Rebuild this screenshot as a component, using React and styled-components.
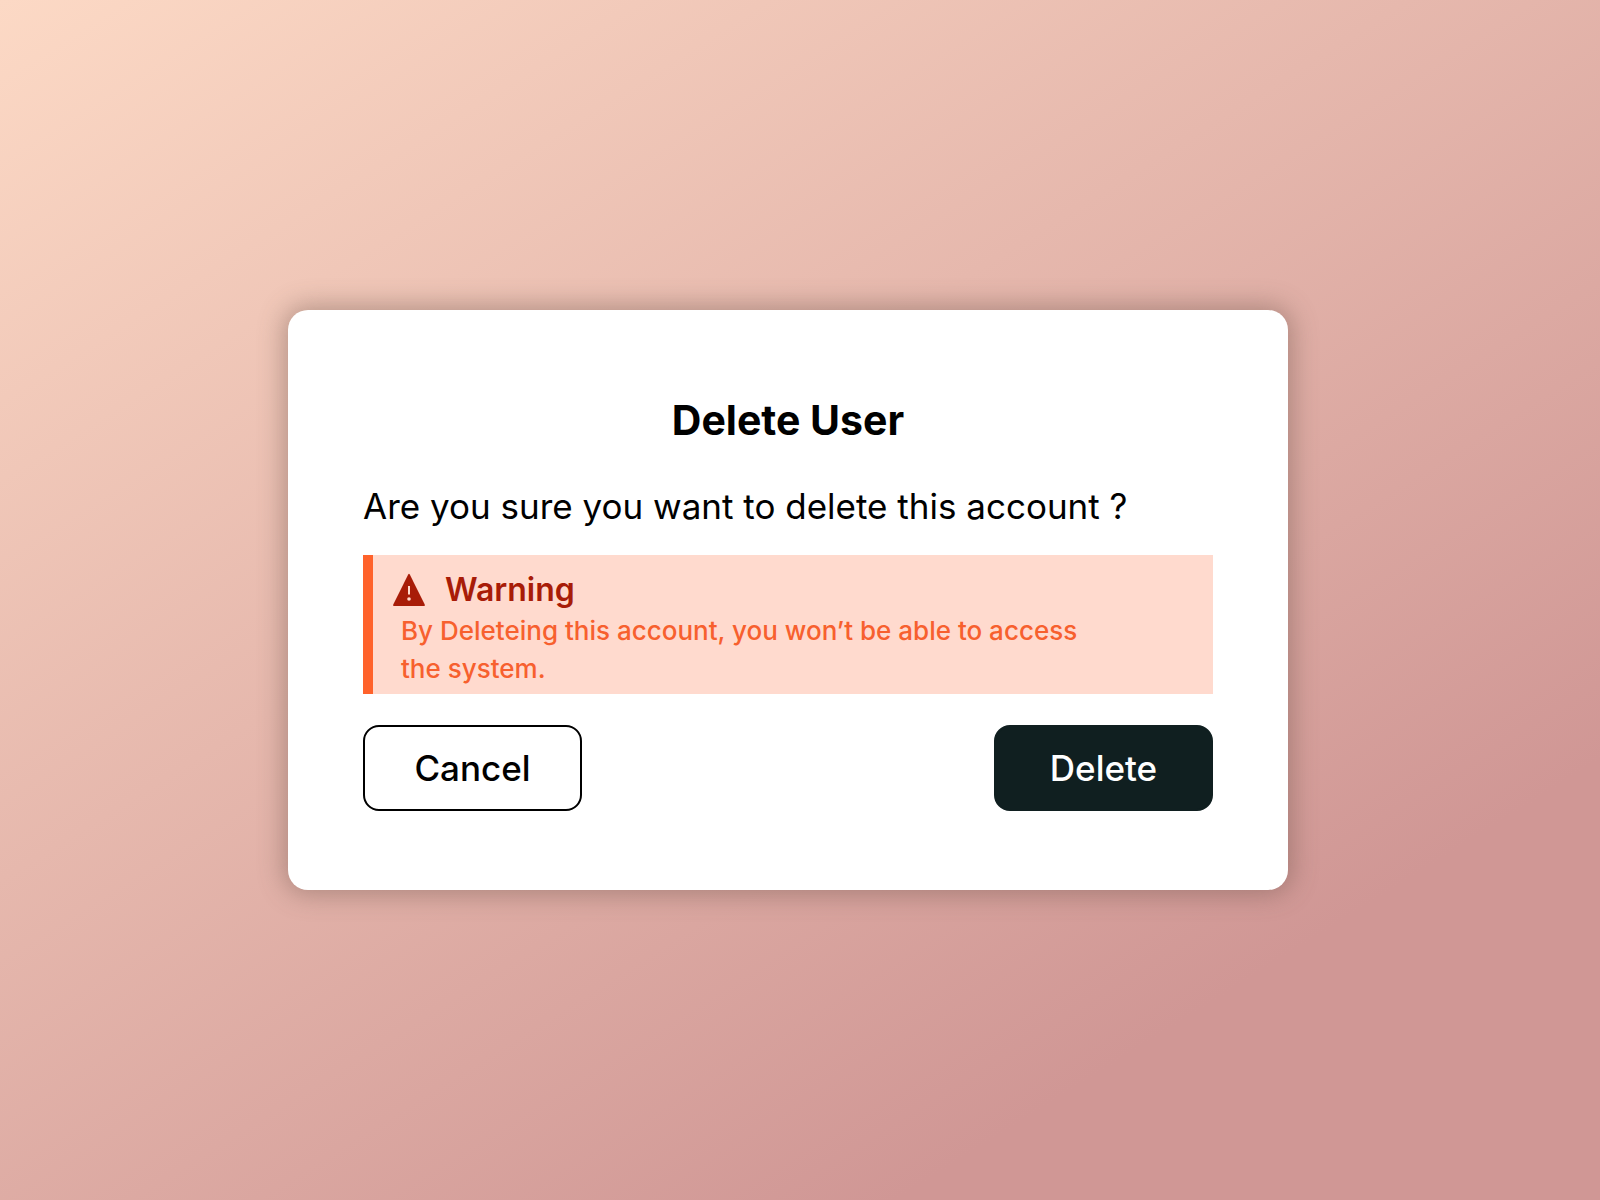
import styled from 'styled-components'
import { createGlobalStyle } from "styled-components"

function App() {
  return (
    <>
      <GlobalStyle />
      <Page>
        <Dialog role="alertdialog" aria-labelledby="dialog-title" aria-describedby="dialog-question">
          <Title id="dialog-title">Delete User</Title>
          <Question id="dialog-question">Are you sure you want to delete this account ?</Question>
          <Warning>
            <WarningHead>
              <WarningIcon />
              <WarningTitle>Warning</WarningTitle>
            </WarningHead>
            <WarningText>By Deleteing this account, you won’t be able to access the system.</WarningText>
          </Warning>
          <Actions>
            <Button type="button">Cancel</Button>
            <DeleteButton type="button">Delete</DeleteButton>
          </Actions>
        </Dialog>
      </Page>
    </>
  );
}

export default App;

function WarningIcon() {
  return (
    <svg width="32" height="34" viewBox="0 0 32 34" aria-hidden="true">
      <path d="M15.2 1.5 Q16 0 16.8 1.5 L31.6 31.2 Q32.4 33 30.6 33 H1.4 Q-0.4 33 0.4 31.2 Z" fill="#a81c08" />
      <path d="M15 13 H17 V21.5 H15 Z" fill="#ffdace" />
      <circle cx="16" cy="26" r="1.8" fill="#ffdace" />
    </svg>
  );
}

// ---------------------------- layout ---------------------------- //

const Page = styled.main`
  display: flex;
  align-items: center;
  justify-content: center;
  min-height: 100vh;
  padding: 24px 24px 24px 0;
  background: linear-gradient(148deg, #fcd9c5 0%, #d09795 80%);
`;

const Dialog = styled.section`
  width: 100%;
  max-width: 1000px;
  padding: 80px 75px 79px;
  border-radius: 20px;
  background-color: white;
  box-shadow: 0 0 26px 4px rgba(100, 76, 66, 0.42);
`;

// ---------------------------- texts ---------------------------- //

const Title = styled.h1`
  font-size: 41px;
  font-weight: 700;
  line-height: 60px;
  text-align: center;
`;

const Question = styled.p`
  margin-top: 32px;
  font-size: 35px;
  line-height: 48px;
`;

// ---------------------------- warning ---------------------------- //

const Warning = styled.div`
  margin-top: 25px;
  padding: 13px 130px 6px 20px;
  border-left: 10px solid #ff622b;
  background-color: #ffdace;
`;

const WarningHead = styled.div`
  display: flex;
  align-items: center;
  gap: 20px;
  margin-bottom: 1px;
`;

const WarningTitle = styled.h2`
  color: #a81c08;
  font-size: 32px;
  font-weight: 600;
  line-height: 43px;
`;

const WarningText = styled.p`
  padding-left: 8px;
  color: #f7602e;
  font-size: 26px;
  font-weight: 500;
  line-height: 38px;
`;

// ---------------------------- buttons ---------------------------- //

const Actions = styled.div`
  display: flex;
  justify-content: space-between;
  margin-top: 31px;
`;

const Button = styled.button`
  width: 219px;
  height: 86px;
  border: 2px solid black;
  border-radius: 16px;
  background-color: white;
  color: black;
  font-family: inherit;
  font-size: 35px;
  font-weight: 500;
  cursor: pointer;
`;

const DeleteButton = styled(Button)`
  border-color: #101f20;
  background-color: #101f20;
  color: white;
`;

const GlobalStyle = createGlobalStyle`
  * {
    padding: 0;
    margin: 0;
    box-sizing: border-box;
  }

  body {
    color: black;
    font-family: Inter, "Open Sans", sans-serif;
  }
`
